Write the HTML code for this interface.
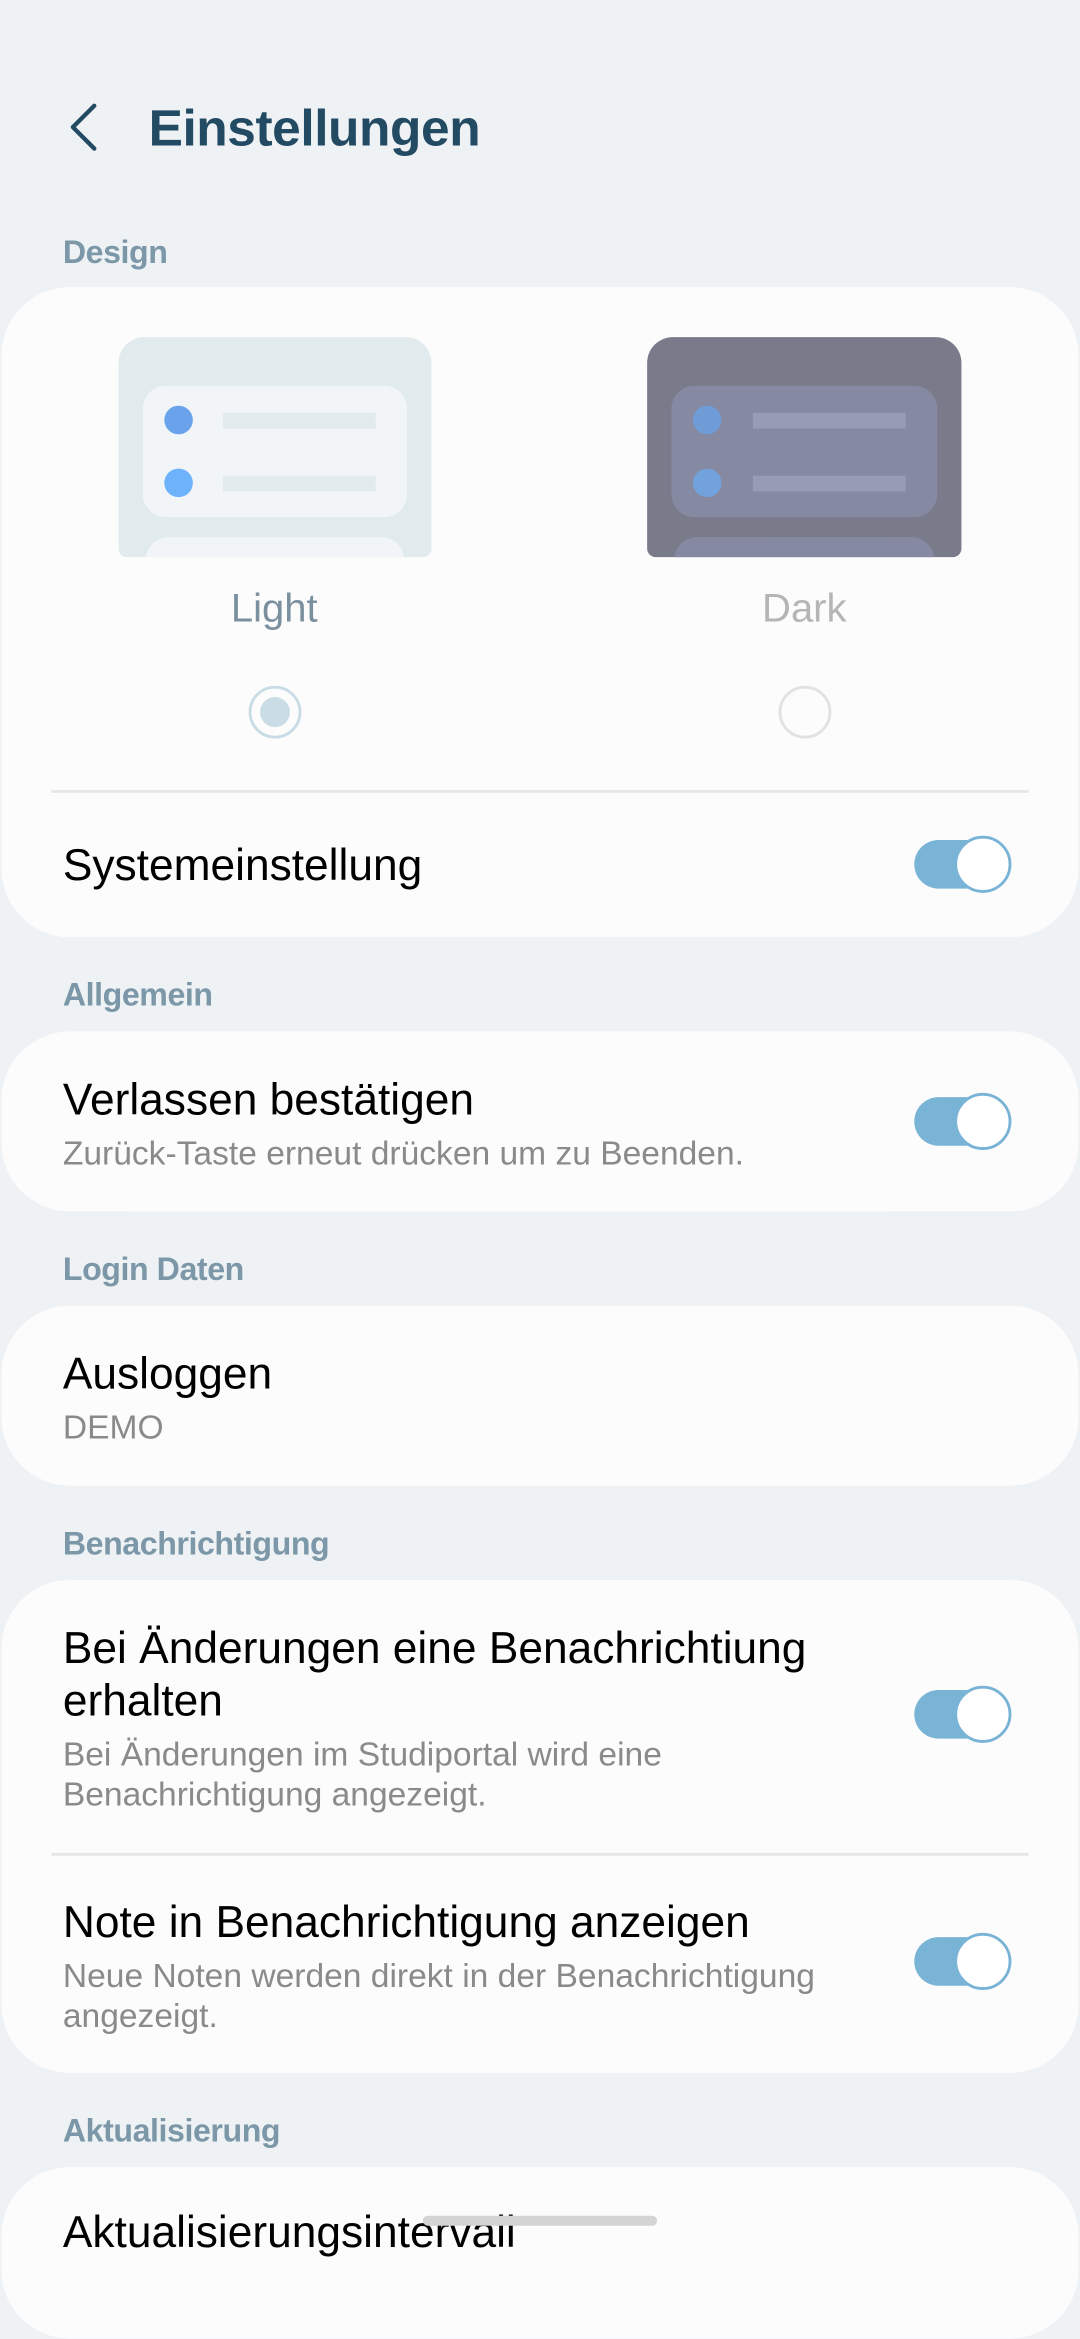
<!DOCTYPE html>
<html><head><meta charset="utf-8"><style>
html,body{margin:0;padding:0;background:#eef2f5;overflow:hidden;width:1080px;height:2240px}
#w{position:absolute;left:0;top:0;width:756px;height:1568px;transform:scale(1.428571);transform-origin:0 0;font-family:"Liberation Sans",sans-serif}
.a{position:absolute;white-space:nowrap}
.card{position:absolute;left:1px;width:754px;background:#fcfcfc;border-radius:48px}
.h{left:44px;font-size:22.5px;color:#7c98a8;font-weight:bold;line-height:24px;letter-spacing:-0.3px}
.t{left:44px;font-size:31px;color:#000;line-height:36px;letter-spacing:0}
.s{left:44px;font-size:23.5px;color:#8a8a8a;line-height:28px;letter-spacing:0}
.tg{position:absolute;left:640px;width:60px;height:34px;border-radius:17px;background:#79b3d6}
.tg::after{content:"";position:absolute;left:28px;top:-3px;width:40px;height:40px;border-radius:50%;background:#fff;border:2px solid #79b3d6;box-sizing:border-box}
.div{position:absolute;left:36px;width:684px;height:2px;background:#e6e6e6}
</style></head><body><div id="w">
<svg class="a" style="left:44px;top:70px" width="30" height="40" viewBox="0 0 30 40"><path d="M22 4 L7 19 L22 34" fill="none" stroke="#224a63" stroke-width="3" stroke-linecap="round" stroke-linejoin="round"/></svg>
<div class="a" style="left:104px;top:68px;font-size:36px;line-height:44px;color:#224a63;font-weight:bold;letter-spacing:-0.3px">Einstellungen</div>
<div class="a h" style="top:165px">Design</div>
<div class="card" style="top:201px;height:455px"></div>
<div class="a" style="left:83px;top:236px;width:219px;height:154px;background:#e1eaed;border-radius:18px 18px 6px 6px;overflow:hidden">
 <div class="a" style="left:17px;top:34px;width:185px;height:92px;background:#f1f5f8;border-radius:16px"></div>
 <div class="a" style="left:32px;top:48px;width:20px;height:20px;border-radius:50%;background:#6aa3ec"></div>
 <div class="a" style="left:32px;top:92px;width:20px;height:20px;border-radius:50%;background:#6cb3fb"></div>
 <div class="a" style="left:73px;top:53px;width:107px;height:11px;background:#e1eaed"></div>
 <div class="a" style="left:73px;top:97px;width:107px;height:11px;background:#e1eaed"></div>
 <div class="a" style="left:19px;top:140px;width:181px;height:40px;background:#f1f5f8;border-radius:16px"></div>
</div>
<div class="a" style="left:453px;top:236px;width:220px;height:154px;background:#7a7b8a;border-radius:18px 18px 6px 6px;overflow:hidden">
 <div class="a" style="left:17px;top:34px;width:186px;height:92px;background:#8589a2;border-radius:16px"></div>
 <div class="a" style="left:32px;top:48px;width:20px;height:20px;border-radius:50%;background:#6f9bd6"></div>
 <div class="a" style="left:32px;top:92px;width:20px;height:20px;border-radius:50%;background:#71a2dc"></div>
 <div class="a" style="left:74px;top:53px;width:107px;height:11px;background:#979bb3"></div>
 <div class="a" style="left:74px;top:97px;width:107px;height:11px;background:#979bb3"></div>
 <div class="a" style="left:19px;top:140px;width:182px;height:40px;background:#8589a2;border-radius:16px"></div>
</div>
<div class="a" style="left:92px;width:200px;text-align:center;top:410px;font-size:28px;line-height:32px;color:#7a909e">Light</div>
<div class="a" style="left:463px;width:200px;text-align:center;top:410px;font-size:28px;line-height:32px;color:#b5b5b5">Dark</div>
<div class="a" style="left:174px;top:480px;width:37px;height:37px;border-radius:50%;border:2px solid #c9dce6;box-sizing:border-box"></div>
<div class="a" style="left:182px;top:488px;width:21px;height:21px;border-radius:50%;background:#cadde6"></div>
<div class="a" style="left:545px;top:480px;width:37px;height:37px;border-radius:50%;border:2px solid #e2e2e2;box-sizing:border-box"></div>
<div class="div" style="top:553px"></div>
<div class="a t" style="top:588px">Systemeinstellung</div>
<div class="tg" style="top:588px"></div>
<div class="a h" style="top:685px">Allgemein</div>
<div class="card" style="top:722px;height:126px"></div>
<div class="a t" style="top:752px">Verlassen bestätigen</div>
<div class="a s" style="top:793px">Zurück-Taste erneut drücken um zu Beenden.</div>
<div class="tg" style="top:768px"></div>
<div class="a h" style="top:877px">Login Daten</div>
<div class="card" style="top:914px;height:126px"></div>
<div class="a t" style="top:944px">Ausloggen</div>
<div class="a s" style="top:985px">DEMO</div>
<div class="a h" style="top:1069px">Benachrichtigung</div>
<div class="card" style="top:1106px;height:345px"></div>
<div class="a t" style="top:1136px">Bei Änderungen eine Benachrichtiung</div>
<div class="a t" style="top:1173px">erhalten</div>
<div class="a s" style="top:1214px">Bei Änderungen im Studiportal wird eine</div>
<div class="a s" style="top:1242px">Benachrichtigung angezeigt.</div>
<div class="tg" style="top:1183px"></div>
<div class="div" style="top:1297px"></div>
<div class="a t" style="top:1328px">Note in Benachrichtigung anzeigen</div>
<div class="a s" style="top:1369px">Neue Noten werden direkt in der Benachrichtigung</div>
<div class="a s" style="top:1397px">angezeigt.</div>
<div class="tg" style="top:1356px"></div>
<div class="a h" style="top:1480px">Aktualisierung</div>
<div class="card" style="top:1517px;height:120px"></div>
<div class="a t" style="top:1545px">Aktualisierungsintervall</div>
<div class="a" style="left:296px;top:1551px;width:164px;height:7px;border-radius:4px;background:#d4d4d4"></div>
</div></body></html>
